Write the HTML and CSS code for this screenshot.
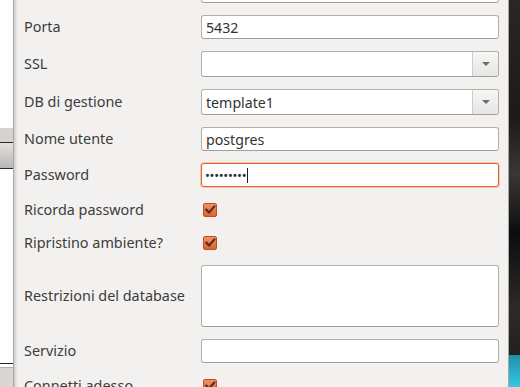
FILE: index.html
```html
<!DOCTYPE html>
<html lang="it">

<head>
    <meta charset="utf-8">
    <title>Nuovo server</title>
    <link rel="stylesheet" href="styles.css">
</head>

<body>
    <div class="behind">
        <div class="behind-tab"></div>
        <div class="behind-toolbar"></div>
        <div class="behind-list"></div>
        <div class="behind-status"></div>
    </div>

    <div class="dialog">
        <div class="form">
            <label class="f-label"></label>
            <div class="field"><span class="f-text"></span></div>

            <label class="f-label">Porta</label>
            <div class="field"><span class="f-text">5432</span></div>

            <label class="f-label">SSL</label>
            <div class="field combo">
                <span class="f-text"></span>
                <span class="combo-btn"><span class="arrow"></span></span>
            </div>

            <label class="f-label">DB di gestione</label>
            <div class="field combo">
                <span class="f-text">template1</span>
                <span class="combo-btn"><span class="arrow"></span></span>
            </div>

            <label class="f-label">Nome utente</label>
            <div class="field"><span class="f-text">postgres</span></div>

            <label class="f-label">Password</label>
            <div class="field focused">
                <span class="f-text dots">•••••••••</span><span class="caret"></span>
            </div>

            <label class="f-label check-row">Ricorda password</label>
            <div class="check-row"><span class="checkbox">
                <svg viewBox="0 0 14 14" width="14" height="14"><path d="M3.2 6.6 L6 9.6 L11.4 3.4" /></svg>
            </span></div>

            <label class="f-label check-row">Ripristino ambiente?</label>
            <div class="check-row"><span class="checkbox">
                <svg viewBox="0 0 14 14" width="14" height="14"><path d="M3.2 6.6 L6 9.6 L11.4 3.4" /></svg>
            </span></div>

            <label class="f-label">Restrizioni del database</label>
            <div class="field area"></div>

            <label class="f-label">Servizio</label>
            <div class="field"><span class="f-text"></span></div>

            <label class="f-label check-row">Connetti adesso</label>
            <div class="check-row"><span class="checkbox">
                <svg viewBox="0 0 14 14" width="14" height="14"><path d="M3.2 6.6 L6 9.6 L11.4 3.4" /></svg>
            </span></div>
        </div>
    </div>

    <div class="desktop">
        <div class="desktop-glow"></div>
    </div>
</body>

</html>
```

FILE: styles.css
```css
body,
html {
    margin: 0;
    padding: 0;
    height: 100%;
    overflow: hidden;
}

body {
    display: flex;
    height: 387px;
    font-family: "Noto Sans", "DejaVu Sans", sans-serif;
    color: #3c3c3c;
    background: #ffffff;
}

/* window lying behind the dialog */
.behind {
    width: 13px;
    flex-shrink: 0;
    display: flex;
    flex-direction: column;
    background: #ffffff;
}

.behind-tab {
    margin-top: 128px;
    height: 14px;
    background: #d4d3d1;
}

.behind-toolbar {
    height: 25px;
    border-top: 1px solid #2b2b2b;
    border-bottom: 1px solid #2b2b2b;
    background: linear-gradient(#e2e1df, #b9b8b6);
}

.behind-list {
    height: 194px;
    border-bottom: 1px solid #262626;
    background: #ffffff;
}

.behind-status {
    flex: 1;
    margin-top: 3px;
    background: #d8d7d5;
    border-top: 1px solid #b0afad;
}

/* the dialog */
.dialog {
    flex: 1;
    background: #f2f1f0;
    border-left: 1px solid #a9a7a3;
    border-right: 1px solid #a9a7a3;
    box-shadow: inset 4px 0 3px -2px #cfcdca;
    padding: 0 8px 0 10px;
    overflow: hidden;
}

.form {
    display: grid;
    grid-template-columns: 177px 298px;
    row-gap: 12px;
    align-items: center;
    margin-top: -21px;
}

.f-label {
    font-size: 14.4px;
    line-height: 18px;
    color: #3c3c3c;
}

.field {
    box-sizing: border-box;
    height: 24px;
    display: flex;
    align-items: center;
    background: #ffffff;
    border: 1px solid #b3afa9;
    border-bottom-color: #a29e98;
    border-radius: 3px;
}

.f-text {
    flex: 1;
    padding-left: 4px;
    font-size: 14.2px;
    color: #333333;
}

.combo {
    height: 26px;
}

.combo-btn {
    width: 25px;
    height: 100%;
    display: flex;
    align-items: center;
    justify-content: center;
    border-left: 1px solid #cfccc7;
    border-radius: 0 3px 3px 0;
    background: linear-gradient(#f7f7f6, #e6e5e3);
}

.arrow {
    width: 0;
    height: 0;
    border-left: 4px solid transparent;
    border-right: 4px solid transparent;
    border-top: 4px solid #6d6d6d;
}

.focused {
    border: 1px solid #e2612f;
    box-shadow: 0 0 0 1px #f7c5ae;
}

.dots {
    flex: 0 0 auto;
    padding-left: 3px;
    font-size: 13px;
    letter-spacing: -0.3px;
    color: #2b3440;
}

.caret {
    width: 1px;
    height: 15px;
    margin-left: 1px;
    background: #1f1f1f;
}

.area {
    height: 62px;
}

.check-row {
    height: 21px;
    display: flex;
    align-items: center;
}

.checkbox {
    box-sizing: border-box;
    width: 14px;
    height: 14px;
    margin-left: 2px;
    display: flex;
    border: 1px solid #b9521f;
    border-radius: 2px;
    background: linear-gradient(#f69061, #e1612c);
}

.checkbox svg {
    margin: -1px;
}

.checkbox path {
    fill: none;
    stroke: #4a3027;
    stroke-width: 2.2;
    stroke-linecap: round;
    stroke-linejoin: round;
}

/* desktop seen past the dialog */
.desktop {
    width: 11px;
    flex-shrink: 0;
    display: flex;
    flex-direction: column;
    justify-content: flex-end;
    background: linear-gradient(#2a2826 0%, #1b1a19 30%, #3a3835 45%, #0d0d0d 60%, #2c2b29 80%, #1a1a1a 100%);
}

.desktop-glow {
    height: 32px;
    background: linear-gradient(#1f8fa6, #35c9e3);
}
```
